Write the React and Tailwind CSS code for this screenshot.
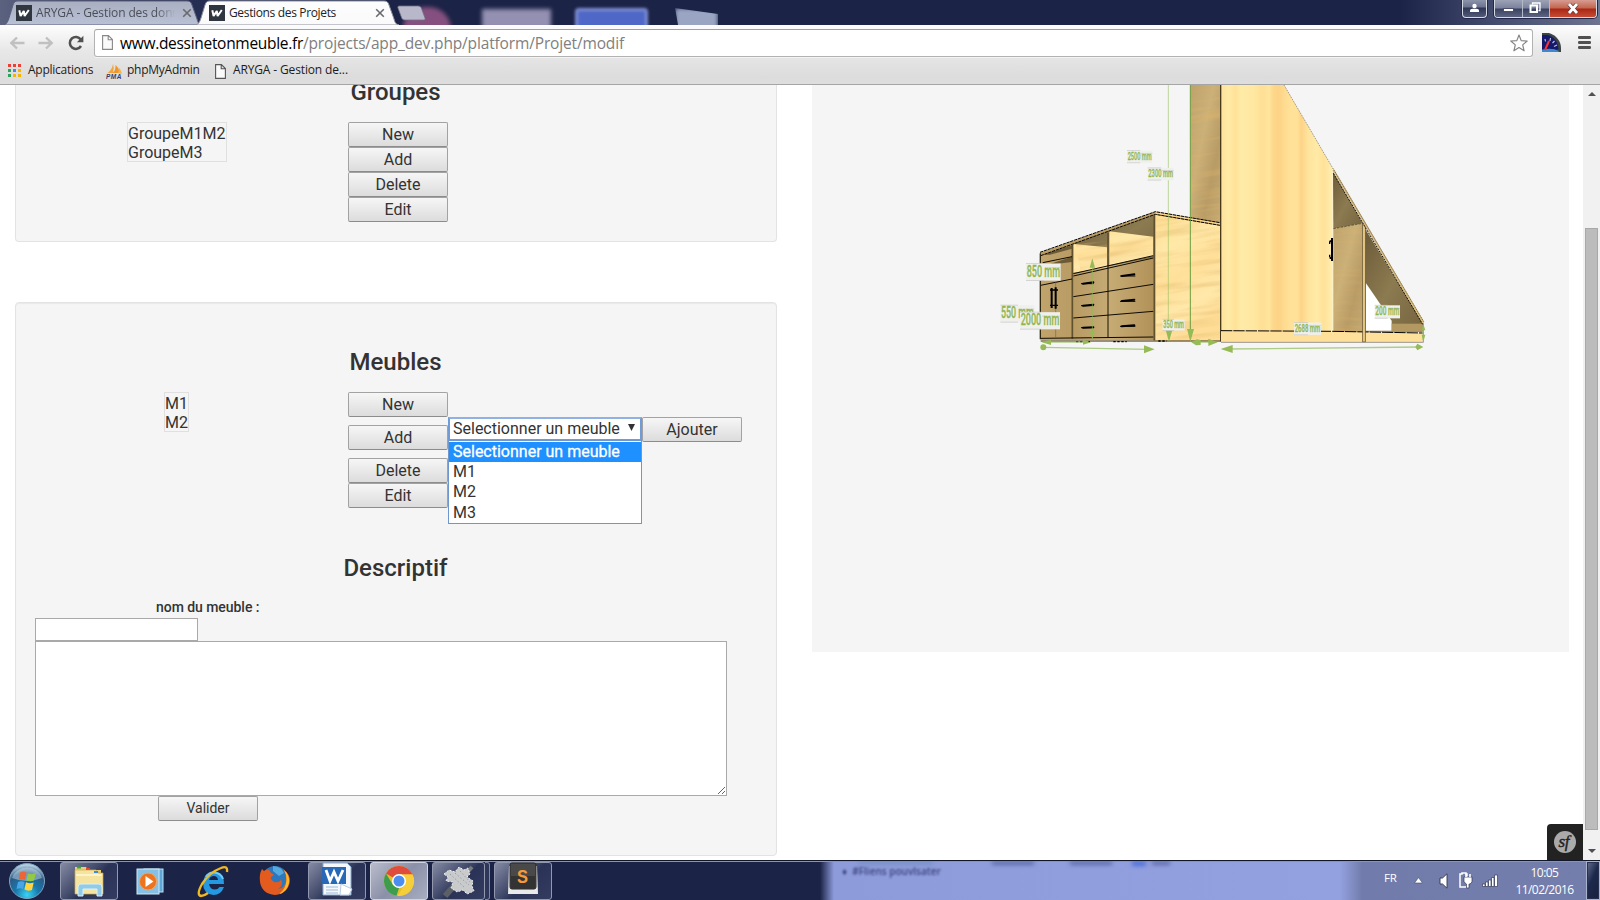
import React from "react";

const UI = "font-['Open_Sans','Noto_Sans',sans-serif]";

function TabShape({ width, from, to, stroke }) {
  const id = "tab" + width;
  return (
    <svg className="absolute left-0 top-0" width={width} height="25" viewBox={`0 0 ${width} 25`}>
      <defs>
        <linearGradient id={id} x1="0" y1="0" x2="0" y2="1">
          <stop offset="0" stopColor={from} />
          <stop offset="1" stopColor={to} />
        </linearGradient>
      </defs>
      <path
        d={`M0 25 C3 24 4 21 5 18 L9 5 C10 2 11 1 14 1 L${width - 15} 1 C${width - 12} 1 ${width - 11} 2 ${width - 10} 5 L${width - 5} 19 C${width - 4} 23 ${width - 3} 24 ${width} 25 Z`}
        fill={`url(#${id})`}
        stroke={stroke}
      />
    </svg>
  );
}

function Favicon() {
  return (
    <svg width="16" height="16" viewBox="0 0 16 16" className="shrink-0">
      <rect width="16" height="16" fill="#30363f" />
      <path d="M3.3 5.2 L4.6 11 L7.8 6 L8.6 11 L12.8 5" fill="none" stroke="#fff" strokeWidth="2" strokeLinejoin="bevel" />
    </svg>
  );
}

function Cross() {
  return (
    <svg width="10" height="10" viewBox="0 0 10 10" className="shrink-0">
      <path d="M1.2 1.2 L8.8 8.8 M8.8 1.2 L1.2 8.8" stroke="#6a6a6e" strokeWidth="1.6" />
    </svg>
  );
}

function PageIcon({ dark }) {
  return (
    <svg width="11" height="15" viewBox="0 0 11 15" className="shrink-0">
      <path d="M.6 .6 H6.4 L10.4 4.6 V14.4 H.6 Z M6.2 .8 V4.8 H10.2" fill="#fafafa" stroke={dark ? "#555" : "#888"} strokeWidth="1.1" />
    </svg>
  );
}

function TabStrip() {
  return (
    <div className="relative flex h-[25px] w-full overflow-hidden bg-[linear-gradient(90deg,#5b6280_0,#2a3358_130px,#1b2346_360px,#1b2346_1400px,#454d70_1500px,#6d7590_1600px)]">
      <div className="absolute left-[403px] top-[7px] h-11 w-12 rounded-full bg-[#85507f] blur-[2px]" />
      <div className="absolute left-[482px] top-[9px] h-5 w-[69px] bg-[#9390b2] blur-[2px]" />
      <div className="absolute left-[575px] top-[8px] h-6 w-[73px] rounded-sm border-[3px] border-[#7f8fd6] bg-[#4f67c6] blur-[1.5px]" />
      <div className="absolute left-[675px] top-[8px] h-6 w-[43px] bg-[#9aa5c4] blur-[2px] [clip-path:polygon(0_0,100%_25%,100%_100%,10%_100%)]" />
      <div className="relative ml-[4px] flex h-[25px] w-[198px] shrink-0 items-center pl-3">
        <TabShape width={198} from="#a9afc0" to="#b9c1d6" stroke="#5b617a" />
        <div className="relative flex items-center">
          <Favicon />
          <div className={`ml-1 w-[139px] overflow-hidden whitespace-nowrap text-[12px] leading-[17px] tracking-[-0.12px] text-[#4c4f58] [mask-image:linear-gradient(90deg,#000_120px,transparent_139px)] ${UI}`}>ARYGA - Gestion des donn</div>
          <span className="ml-[7px]"><Cross /></span>
        </div>
      </div>
      <div className="relative -ml-[6px] flex h-[25px] w-[203px] shrink-0 items-center pl-[13px]">
        <TabShape width={203} from="#fdfdfd" to="#fafafa" stroke="#8c8f9e" />
        <div className="relative flex items-center">
          <Favicon />
          <div className={`ml-1 w-[146px] whitespace-nowrap text-[12px] leading-[17px] tracking-[-0.35px] text-[#222] ${UI}`}>Gestions des Projets</div>
          <Cross />
        </div>
      </div>
      <svg width="32" height="25" viewBox="0 0 32 25" className="relative -ml-[3px] shrink-0">
        <path d="M4 6 H22 C24 6 25 7 25.500 8.500 L29 18 C29.500 19.500 29 20 27 20 H9 C7 20 6 19 5.500 17.500 L2 8 C1.500 6.500 2 6 4 6 Z" fill="#b9b8cb" stroke="#6e7086" strokeWidth=".8" />
      </svg>
      <div className="relative ml-auto mr-[3px] flex items-start gap-[7px]">
        <div className="flex h-[18px] w-[25px] items-center justify-center rounded-b-[4px] border border-t-0 border-[#d5d9e4] bg-[linear-gradient(#8c93aa_0,#6b738f_7px,#2e3658_8px,#555d7b_18px)] shadow-[0_0_0_1px_#22284a]">
          <svg width="11" height="12" viewBox="0 0 11 12" className="-mt-px"><circle cx="5.500" cy="4" r="2.200" fill="#fff" /><path d="M1 10 V8.500 C1 7 3 6.800 5.500 6.800 S10 7 10 8.500 V10 Z" fill="#fff" /></svg>
        </div>
        <div className="flex h-[18px] w-[103px] overflow-hidden rounded-b-[4px] border border-t-0 border-[#d5d9e4] shadow-[0_0_0_1px_#22284a]">
          <div className="flex w-[28px] items-center justify-center border-r border-[#b5bacb] bg-[linear-gradient(#9ca2b6_0,#7b829c_8px,#3a4263_9px,#606885_18px)]">
            <div className="mt-[3px] h-[4px] w-[11px] border border-[#4b5068] bg-white" />
          </div>
          <div className="flex w-[27px] items-center justify-center border-r border-[#b5bacb] bg-[linear-gradient(#9ca2b6_0,#7b829c_8px,#3a4263_9px,#606885_18px)]">
            <svg width="12" height="12" viewBox="0 0 12 12" className="-ml-[3px] -mt-px"><path d="M3.500 2.500 V1 H11 V8.500 H9.500" fill="none" stroke="#fff" strokeWidth="1.300" /><rect x="1.500" y="3.500" width="6.500" height="6.500" fill="none" stroke="#fff" strokeWidth="2" /></svg>
          </div>
          <div className="flex flex-1 items-center justify-center bg-[linear-gradient(#d69c92_0,#c3664f_8px,#a92713_9px,#c9503a_18px)]">
            <svg width="12" height="11" viewBox="0 0 12 11" className="-mt-px"><path d="M2 1 L10 10 M10 1 L2 10" stroke="#5b3a40" strokeWidth="4.200" /><path d="M2 1 L10 10 M10 1 L2 10" stroke="#fff" strokeWidth="2.800" /></svg>
          </div>
        </div>
      </div>
    </div>
  );
}

function Arrow({ flip }) {
  return (
    <svg width="16" height="14" viewBox="0 0 16 14" className={flip ? "scale-x-[-1]" : ""}>
      <path d="M15.500 7 H2.500 M8 1.500 L2.300 7 L8 12.500" fill="none" stroke="#c0c0c0" strokeWidth="2.400" />
    </svg>
  );
}

function Toolbar() {
  return (
    <div className="h-[60px] w-full border-b border-[#a5a5a5] bg-[linear-gradient(#fdfdfd_0,#e8e8e8_25px,#dcdcdc_52px,#dedede_60px)]">
      <div className="flex h-[35px] items-center">
        <div className="ml-[9px]"><Arrow /></div>
        <div className="ml-[13px]"><Arrow flip /></div>
        <svg width="16" height="16" viewBox="0 0 16 16" className="ml-[14px]">
          <path d="M13 11 A6 6 0 1 1 12.800 4.500" fill="none" stroke="#515151" strokeWidth="2.500" />
          <path d="M15.400 .8 V7.300 H8.900 Z" fill="#515151" />
        </svg>
        <div className="ml-[10px] flex h-[28px] w-[1439px] items-center rounded-[3px] border border-[#b2b2b2] border-t-[#a0a0a0] bg-white pl-[7px] shadow-[0_1px_0_#f4f4f4]">
          <PageIcon />
          <div className={`ml-[7px] whitespace-nowrap text-[15.500px] leading-[22px] text-[#808080] ${UI}`}>
            <span className="tracking-[-0.300px] text-black">www.dessinetonmeuble.fr</span><span className="tracking-[-0.15px]">/projects/app_dev.php/platform/Projet/modif</span>
          </div>
          <svg width="18" height="18" viewBox="0 0 18 18" className="ml-auto mr-[4px]">
            <path d="M9 1 L11.200 6.600 L17.200 7 L12.700 10.900 L14.100 16.800 L9 13.600 L3.900 16.800 L5.300 10.900 L.8 7 L6.800 6.600 Z" fill="#fff" stroke="#858585" strokeWidth="1.200" strokeLinejoin="round" />
          </svg>
        </div>
        <svg width="19" height="19" viewBox="0 0 19 19" className="ml-[9px]">
          <path d="M0 0 H7 C14 2 19 8 19 15 V19 H0 Z" fill="#3c4543" />
          <path d="M0 2 H5 C12 3 16 9 16.500 16 L14 17 L10 16 H0 Z" fill="#15186b" />
          <path d="M0 17 Q9 14 17 18 L16 19 H0 Z" fill="#3c8bd0" />
          <path d="M3 17 L7 8" stroke="#ff3030" strokeWidth="2" />
          <path d="M3 6 L3.500 8.500 M8.500 5 L8 8 M12.500 8 L10.500 10 M15 12 L12 13.500" stroke="#b9bddf" strokeWidth="1.200" />
        </svg>
        <svg width="13" height="13" viewBox="0 0 13 13" className="ml-[17px]">
          <path d="M1.300 1.500 H11.700 M1.300 6.500 H11.700 M1.300 11.500 H11.700" stroke="#505050" strokeWidth="2.800" strokeLinecap="round" />
        </svg>
      </div>
      <div className={`flex h-[24px] items-center pb-[5px] text-[12px] leading-[18px] text-[#1c1c1c] ${UI}`}>
        <svg width="14" height="14" viewBox="0 0 14 14" className="ml-[8px] mt-[3px]">
          <path d="M0 0h3v3H0z M5 0h3v3H5z M10 0h3v3h-3z" fill="#ed3f35" />
          <path d="M0 5h3v3H0z M0 10h3v3H0z" fill="#2fa25a" />
          <path d="M5 5h3v3H5z" fill="#4688f1" />
          <path d="M10 5h3v3h-3z M5 10h3v3H5z M10 10h3v3h-3z" fill="#f5b400" />
        </svg>
        <span className="ml-[6px] w-[78px] whitespace-nowrap tracking-[-0.26px]">Applications</span>
        <svg width="17" height="16" viewBox="0 0 17 16" className="mt-[3px]">
          <path d="M1.500 10 Q6 7 7 1 Q8.500 5 7 10 Z" fill="#f0a43c" />
          <path d="M6.500 10 Q10 7 9.500 2 Q14 6 13 10 Z" fill="#ef9628" />
          <path d="M12 10 Q13 8 12.700 4.500 Q16 8 15.500 11 Z" fill="#f3b055" />
          <text x="0" y="15.500" fontSize="6.500" fontWeight="700" fontStyle="italic" fontFamily="Liberation Sans" fill="#3a3a68" textLength="15.500">PMA</text>
        </svg>
        <span className="ml-[4px] w-[88px] whitespace-nowrap tracking-[-0.26px]">phpMyAdmin</span>
        <span className="mt-[3px]"><PageIcon dark /></span>
        <span className="ml-[7px] whitespace-nowrap tracking-[-0.14px]">ARYGA - Gestion de...</span>
      </div>
    </div>
  );
}

function Btn({ children, className = "" }) {
  return (
    <button className={`block h-[25px] w-[100px] shrink-0 rounded-[2px] border border-[#a2a2a2] border-b-[#8c8c8c] bg-[linear-gradient(#f6f6f6,#dcdcdc)] text-center text-[#333] ${className || "text-[16px] leading-[24px]"}`}>
      {children}
    </button>
  );
}

function ListBox({ items }) {
  return (
    <div className="h-[40px] border border-[#e0e0e0] pt-px text-[16px] leading-[19px] text-[#333]">
      {items.map((t) => <div key={t}>{t}</div>)}
    </div>
  );
}

const heading = "text-center text-[24px] font-medium leading-[26px] text-[#333]";

function Groupes() {
  return (
    <section className="flex h-[157px] flex-col rounded-b-[4px] border border-t-0 border-[#e3e3e3] bg-[#f5f5f5] px-[19px]">
      <h3 className={`-mt-[6px] w-[721px] ${heading}`}>Groupes</h3>
      <div className="mt-[17px] flex">
        <div className="flex w-[313px] items-start pl-[92px]"><ListBox items={["GroupeM1M2", "GroupeM3"]} /></div>
        <div className="flex flex-col">
          <Btn>New</Btn><Btn>Add</Btn><Btn>Delete</Btn><Btn>Edit</Btn>
        </div>
      </div>
    </section>
  );
}

function Meubles() {
  return (
    <section className="mt-[60px] h-[554px] rounded-[4px] border border-[#e3e3e3] bg-[#f5f5f5] px-[19px] shadow-[inset_0_1px_1px_rgba(0,0,0,.05)]">
      <h3 className={`mt-[46px] w-[721px] ${heading}`}>Meubles</h3>
      <div className="mt-[17px] flex h-[116px]">
        <div className="flex w-[313px] items-start pl-[129px]"><ListBox items={["M1", "M2"]} /></div>
        <div>
          <Btn>New</Btn>
          <div className="flex h-[41px] items-start">
            <div className="mt-[8px]"><Btn>Add</Btn></div>
            <div className="relative flex h-[24px] w-[194px] items-center border-2 border-[#6f9bd8] border-t-[#8fb1e4] bg-white pl-[3px] text-[16px] text-[#333]">
              <span className="whitespace-nowrap">Selectionner un meuble</span>
              <svg width="7" height="7" viewBox="0 0 7 7" className="mb-[3px] ml-auto mr-[5px]"><path d="M0 0 H7 L3.500 7 Z" fill="#333" /></svg>
              <div className="absolute -left-[2px] top-[21px] z-10 h-[84px] w-[194px] border border-[#6f97cf] bg-white pt-px text-[16px] leading-[20.400px]">
                <div className="h-[20px] whitespace-nowrap bg-[#1e90ff] pl-[4px] text-white [-webkit-text-stroke:0.3px_white]">Selectionner un meuble</div>
                <div className="pl-[4px]">M1</div>
                <div className="pl-[4px]">M2</div>
                <div className="pl-[4px]">M3</div>
              </div>
            </div>
            <Btn>Ajouter</Btn>
          </div>
          <Btn>Delete</Btn>
          <Btn>Edit</Btn>
        </div>
      </div>
      <h3 className={`mt-[47px] w-[721px] ${heading}`}>Descriptif</h3>
      <div className="mt-[16px] h-[21px] pl-[121px] pt-px text-[14px] font-medium leading-[18px] tracking-[-0.05px] text-[#333]">nom du meuble :</div>
      <input className="block h-[23px] w-[163px] border border-[#a9a9a9] bg-white" />
      <textarea className="block h-[155px] w-[692px] resize border border-[#a9a9a9] bg-white" />
      <div className="pl-[123px]"><Btn className="text-[14px] leading-[23px]">Valider</Btn></div>
    </section>
  );
}

function Dim({ x, y, w, size, children }) {
  return (
    <g>
      <rect x={x - 2} y={y - size * 0.86} width={w + 4} height={size * 1.12} fill="#efefec" />
      <path d={`M${x - 2} ${y - size * 0.86} H${x + w * 0.52} M${x - 2} ${y + size * 0.25} H${x + w * 0.52} M${x + w * 0.55} ${y - size * 0.6} H${x + w + 2}`} stroke="#c6c6c6" strokeWidth="2" />
      <text x={x} y={y} fontSize={size * 1.06} fontWeight="500" fontFamily="Roboto" fill="#8fb64f" stroke="#8fb64f" strokeWidth=".8" textLength={w} lengthAdjust="spacingAndGlyphs">{children}</text>
    </g>
  );
}

function Furniture() {
  return (
    <svg width="460" height="285" viewBox="0 15 1380 855" className="ml-[168px] block">
      <defs>
        <linearGradient id="door" x1="0" x2="1" y1="0" y2="0">
          <stop offset="0" stopColor="#ffe39b" /><stop offset=".07" stopColor="#ffeaa6" /><stop offset=".13" stopColor="#ffe298" />
          <stop offset=".18" stopColor="#ffeba7" /><stop offset=".3" stopColor="#ffe7a0" /><stop offset=".37" stopColor="#fedf95" />
          <stop offset=".43" stopColor="#ffe59d" /><stop offset=".47" stopColor="#fdd78a" /><stop offset=".52" stopColor="#fdd387" />
          <stop offset=".6" stopColor="#ffe096" /><stop offset=".68" stopColor="#ffe298" /><stop offset=".72" stopColor="#fed388" />
          <stop offset=".78" stopColor="#ffe49d" /><stop offset=".86" stopColor="#ffeaa6" /><stop offset=".92" stopColor="#ffe298" /><stop offset="1" stopColor="#ffeeb0" />
        </linearGradient>
        <linearGradient id="brown" x1="0" x2="1" y1="0" y2="1">
          <stop offset="0" stopColor="#bda26b" /><stop offset=".4" stopColor="#cbb078" /><stop offset=".7" stopColor="#b89b65" /><stop offset="1" stopColor="#c4a972" />
        </linearGradient>
        <linearGradient id="side" x1="0" x2=".3" y1="0" y2="1">
          <stop offset="0" stopColor="#fedd92" /><stop offset=".3" stopColor="#ffe8a8" /><stop offset=".55" stopColor="#ffe09a" /><stop offset=".8" stopColor="#ffe8aa" /><stop offset="1" stopColor="#ffdd96" />
        </linearGradient>
        <linearGradient id="drawer" x1="0" x2="1" y1="0" y2="0">
          <stop offset="0" stopColor="#c0a46c" /><stop offset=".3" stopColor="#b99b64" /><stop offset=".6" stopColor="#c6ab74" /><stop offset="1" stopColor="#b09158" />
        </linearGradient>
        <linearGradient id="shade" x1="0" x2="1" y1="0" y2="1">
          <stop offset="0" stopColor="#6b5b38" /><stop offset=".5" stopColor="#8c7a50" /><stop offset="1" stopColor="#75643f" />
        </linearGradient>
        <filter id="grain" x="0" y="0" width="1" height="1">
          <feTurbulence type="fractalNoise" baseFrequency=".006 .06" numOctaves="2" seed="4" />
          <feColorMatrix values="0 0 0 0 .75  0 0 0 0 .48  0 0 0 0 .15  0 1.6 0 0 -.68" />
        </filter>
        <clipPath id="sideClip"><path d="M526 405 L720 436 V783 H526 Z M631 15 H720 V428 L631 412 Z M280 492 L520 470 V530 L280 580 Z M1060 446 L1148 430 V755 H1060 Z" /></clipPath>
      </defs>

      <path d="M631 15 H720 V430 L631 414 Z" fill="url(#brown)" />
      <path d="M526 403 L720 436 V783 H522 Z" fill="url(#side)" />
      <path d="M182 522 L526 398 V780 H182 Z" fill="url(#drawer)" />
      <path d="M278 490 L522 404 V532 L278 580 Z" fill="url(#shade)" />
      <path d="M280 492 L382 502 V562 L280 578 Z M388 454 L520 470 V528 L388 556 Z" fill="url(#side)" />
      <path d="M188 524 L276 496 V506 L210 524 Z M198 556 L276 530 V546 Z" fill="#6b5a36" />
      <g clipPath="url(#sideClip)"><rect x="280" y="15" width="880" height="770" filter="url(#grain)" opacity=".7" transform="rotate(-9 600 400)" /></g>
      <path d="M180 518 L526 395 L720 428 V437 L526 404 L182 528 Z" fill="#bb9d62" />
      <path d="M526 396 L720 429 V435 L526 402 Z" fill="#f9d58b" />
      <path d="M180 517 L526 395 L720 428 M182 527 L526 403 L720 436" fill="none" stroke="#000" strokeWidth="3" strokeDasharray="10 2" />
      <path d="M181 520 V778" stroke="#30280f" strokeWidth="4" />
      <path d="M277 494 V776 M384 458 V774 M523 404 V782" stroke="#5f502e" strokeWidth="5" />
      <path d="M280 581 L520 527 M280 588 L520 534 M182 616 L276 597 M280 650 L520 613 M280 714 L520 694 M182 775 L520 771 M188 548 L276 530" stroke="#0d0a04" strokeWidth="3" fill="none" />
      <path d="M182 783 H720" stroke="#7b6b4a" strokeWidth="4" />
      <path d="M227 607 V774" stroke="#80683c" strokeWidth="2" />
      <path d="M215 624 V684 M227 622 V686" stroke="#000" strokeWidth="6" />
      <path d="M210 630 H234 M210 676 H234" stroke="#000" strokeWidth="4" />
      <path d="M309 611 L340 607 M309 677 L340 674 M309 743 L340 742 M426 588 L463 583 M426 663 L463 659 M426 739 L463 736" stroke="#000" strokeWidth="6" strokeLinecap="round" />
      <path d="M303 611 H341 M303 677 H341 M303 743 H341 M420 588 H466 M420 664 H466 M420 739 H466" stroke="#000" strokeWidth="3" />
      <path d="M288 785 H330 M400 785 H440 M535 783 H560" stroke="#000" strokeWidth="4" strokeDasharray="7 5" />

      <path d="M723 15 H912 L1058 264 V754 H723 Z" fill="url(#door)" />
      <path d="M722 15 V785" stroke="#473a1c" strokeWidth="4" />
      <path d="M912 15 L1058 264" stroke="#a29c8e" strokeWidth="3" strokeDasharray="5 3" />
      <path d="M1059 276 L1148 430 L1060 446 Z" fill="url(#shade)" />
      <path d="M1060 446 L1148 430 V757 H1060 Z" fill="url(#brown)" />
      <g clipPath="url(#sideClip)"><rect x="1060" y="400" width="100" height="360" filter="url(#grain)" opacity=".4" /></g>
      <path d="M1060 446 L1148 430" stroke="#453718" strokeWidth="2" strokeDasharray="8 3" />
      <path d="M1156 448 L1328 728 V755 H1156 Z" fill="url(#shade)" />
      <path d="M1157 608 L1235 722 V752 H1157 Z" fill="#fff" />
      <path d="M1235 731 H1328 V754 H1235 Z" fill="#b39861" />
      <path d="M723 752 L1328 758 V786 H723 Z" fill="#ffe09a" />
      <path d="M723 752 L1058 754 M1058 754 L1328 759" stroke="#000" strokeWidth="3" strokeDasharray="34 3" />
      <path d="M1148 432 H1156 V786 H1148 Z" fill="#f7d88e" stroke="#5c4b27" strokeWidth="2.500" />
      <path d="M723 787 H1330 V728" fill="none" stroke="#9c978b" strokeWidth="3" />
      <path d="M1060 270 L1330 728" stroke="#d9be80" strokeWidth="7" />
      <path d="M1058 264 L1331 725" stroke="#6e654f" strokeWidth="2.500" strokeDasharray="5 2" />
      <path d="M1060 280 L1328 733" stroke="#171004" strokeWidth="3" strokeDasharray="6 3" />
      <path d="M1056 474 V543 M1049 484 H1058 M1049 534 H1058" stroke="#000" strokeWidth="6" />
      <path d="M1049 484 V492 M1049 524 V532" stroke="#000" strokeWidth="4" />

      <g stroke="#8fbb55" fill="none">
        <path d="M565 15 V775" strokeWidth="3" opacity=".55" />
        <path d="M631 15 V750" strokeWidth="3" stroke="#6c9d3e" />
        <path d="M337 555 V765" strokeWidth="3" opacity=".7" />
        <path d="M190 802 L500 808 M745 807 L1320 801" strokeWidth="4" opacity=".7" />
        <path d="M200 786 H320 M650 786 H700 M1330 740 V780" strokeWidth="3" />
      </g>
      <g fill="#94bb55">
        <path d="M337 535 L345 563 H329 Z M337 778 L329 752 H345 Z M567 785 L557 750 H577 Z M631 785 L621 747 H642 Z" />
        <path d="M524 808 L492 796 V820 Z M722 807 L758 795 V819 Z M185 787 L213 779 V795 Z M333 787 L309 779 V794 Z M634 787 L650 778 L662 780 V795 L648 796 Z M713 787 L685 776 V798 Z" />
        <path d="M1330 732 L1336 751 H1325 Z M1330 786 L1325 764 H1336 Z M1330 801 L1312 791 L1306 801 L1312 811 Z" />
        <circle cx="190" cy="802" r="9" />
      </g>

      <Dim x={443} y={240} w={72} size={33}>2500 mm</Dim>
      <Dim x={505} y={292} w={74} size={33}>2300 mm</Dim>
      <Dim x={140} y={590} w={100} size={46}>850 mm</Dim>
      <Dim x={63} y={715} w={98} size={46}>550 mm</Dim>
      <Dim x={122} y={736} w={116} size={46}>2000 mm</Dim>
      <Dim x={550} y={744} w={62} size={30}>350 mm</Dim>
      <Dim x={944} y={756} w={77} size={33}>2688 mm</Dim>
      <Dim x={1186} y={706} w={72} size={35}>200 mm</Dim>
    </svg>
  );
}

function Page() {
  return (
    <main className="flex h-[775px] w-full overflow-hidden bg-white font-[Roboto,sans-serif]">
      <div className="ml-[15px] w-[762px] shrink-0">
        <Groupes />
        <Meubles />
      </div>
      <div className="ml-[35px] h-[567px] w-[757px] shrink-0 bg-[#f5f5f5]">
        <Furniture />
      </div>
      <div className="relative w-[14px] shrink-0">
        <div className="absolute bottom-0 right-0 flex h-[36px] w-[36px] items-center justify-center rounded-tl-[4px] bg-[#222]">
          <svg width="24" height="24" viewBox="0 0 24 24">
            <circle cx="12" cy="12" r="11" fill="#aaa" />
            <text x="5.500" y="16.500" fontSize="17" fontStyle="italic" fontFamily="Liberation Serif" fill="#222" stroke="#222" strokeWidth=".4" textLength="11">sf</text>
          </svg>
        </div>
      </div>
      <div className="flex w-[17px] shrink-0 flex-col items-center bg-[#f1f1f1]">
        <svg width="8" height="4" viewBox="0 0 8 4" className="mt-[7px]"><path d="M4 0 L8 4 H0 Z" fill="#505050" /></svg>
        <div className="mt-[132px] h-[602px] w-[13px] border border-[#a8a8a8] bg-[#bcbcbc]" />
        <svg width="8" height="4" viewBox="0 0 8 4" className="mt-[19px]"><path d="M4 4 L8 0 H0 Z" fill="#505050" /></svg>
      </div>
    </main>
  );
}

function Task({ active, className, children }) {
  return (
    <div className={`flex h-[38px] shrink-0 items-center justify-center rounded-[3px] border ${active ? "border-[#d0d4e0] bg-[linear-gradient(135deg,#b9bccb,#8a90a8_50%,#a9aec0)]" : "border-[#9298ae] bg-[linear-gradient(135deg,#858ba4_0,#3e4667_45%,#2a3257_55%,#343c60_100%)]"} ${className}`}>
      {children}
    </div>
  );
}

function StartOrb() {
  return (
    <svg width="38" height="38" viewBox="0 0 38 38" className="ml-[8px] shrink-0">
      <defs>
        <radialGradient id="orb" cx=".5" cy=".9" r=".85">
          <stop offset="0" stopColor="#39d4f5" /><stop offset=".4" stopColor="#1878ac" /><stop offset=".75" stopColor="#2c5a85" /><stop offset="1" stopColor="#b3cfe0" />
        </radialGradient>
      </defs>
      <circle cx="19" cy="19" r="17.500" fill="url(#orb)" stroke="#7fa4bd" />
      <path d="M4 16 A15.500 14 0 0 1 34 16 Q19 22 4 16" fill="#d3e4ee" opacity=".45" />
      <path d="M12 10.500 Q15 8.500 18.500 10.500 L17 18 Q13.500 16.500 10.500 18 Z" fill="#ee6535" />
      <path d="M20 11.500 Q24 13 28 11 L26 18.500 Q22.500 20 18.500 18.500 Z" fill="#94c944" />
      <path d="M10 20 Q13 18.500 16.600 20 L15 27 Q12 25.500 8.500 27 Z" fill="#4aa5e6" />
      <path d="M18 20.300 Q22 22 25.700 20.500 L24 28 Q20 29.500 16.400 27.600 Z" fill="#ffd43e" />
    </svg>
  );
}

function Explorer() {
  return (
    <svg width="34" height="32" viewBox="0 0 34 32">
      <path d="M3 2 H14 L16 5 H29 V28 H3 Z" fill="#e9ce75" />
      <path d="M3 5 H24 L26 8 H31 V29 H3 Z" fill="#f5e4a0" stroke="#cfae51" strokeWidth=".7" />
      <path d="M4 10 H30" stroke="#fff4c9" strokeWidth="2" />
      <rect x="5" y="1.500" width="4" height="2" fill="#2fab34" /><rect x="14" y="3" width="4" height="2" fill="#e64831" /><rect x="22" y="6" width="4" height="2" fill="#3f8ae0" />
      <path d="M6 31 V22 Q6 19 9 19 H27 Q30 19 30 22 V31 H25 V24 H11 V31 Z" fill="#91cbe7" stroke="#d9f0fa" strokeWidth="1" />
    </svg>
  );
}

function Taskbar() {
  return (
    <footer className="relative flex h-[40px] w-full items-center overflow-hidden border-t border-[#111629] bg-[linear-gradient(90deg,#1b2346_0,#1b2346_820px,#8e9bdb_834px,#94a1e0_1340px,#727cac_1362px,#747eab_1600px)] shadow-[inset_0_1px_0_#8c94b4]">
      <div className={`absolute left-[842px] top-[3px] whitespace-nowrap text-[10px] font-semibold leading-[14px] text-[#39447e] blur-[1.3px] ${UI}`}>♦&nbsp; #Fliens pouvlsater</div>
      <div className="absolute left-[858px] top-0 h-[3px] w-[75px] bg-[#6f8dbb] blur-[2px]" />
      <div className="absolute left-[992px] top-0 h-[4px] w-[42px] bg-[#5d6aa9] blur-[2px]" />
      <div className="absolute left-[1070px] top-0 h-[4px] w-[42px] bg-[#5d6aa9] blur-[2px]" />
      <div className="absolute left-[1132px] top-0 h-[5px] w-[14px] bg-[#4d70d8] blur-[2px]" />
      <div className="absolute left-[1152px] top-0 h-[4px] w-[18px] bg-[#5d6aa9] blur-[2px]" />
      <StartOrb />
      <Task className="ml-[14px] w-[58px]"><Explorer /></Task>
      <svg width="28" height="30" viewBox="0 0 28 30" className="ml-[18px] shrink-0">
        <rect x="8" y="3" width="19" height="23" fill="#5fa6d6" stroke="#bce0f4" /><rect x="1" y="3" width="22" height="25" fill="#85c0e5" stroke="#d0ebf8" />
        <circle cx="12" cy="15.500" r="8.500" fill="#ec7420" stroke="#f5a45c" /><path d="M9.500 10 L17.500 15.500 L9.500 21 Z" fill="#fff" />
      </svg>
      <svg width="34" height="34" viewBox="0 0 34 34" className="ml-[32px] shrink-0">
        <path d="M28 20 H13 Q14 25.500 19 25.500 Q22 25.500 23.500 23 H28 Q25 31 17.500 31 Q7 30 7 19 Q8 8 18 7.500 Q28 8 28 20 Z M13 16 H22 Q21.500 12 17.800 12 Q14 12 13 16 Z" fill="#2498e0" fillRule="evenodd" />
        <path d="M10 13 Q13 8 18 8.500 Q25 9 27 15" fill="none" stroke="#72c9f5" strokeWidth="2" />
        <path d="M31 8 Q32 1 25 4 Q14 8 6 20 Q0 31 5 32 Q8 32 12 29" fill="none" stroke="#efb925" strokeWidth="2.300" />
      </svg>
      <svg width="32" height="34" viewBox="0 0 32 34" className="ml-[29px] shrink-0">
        <circle cx="16" cy="15" r="13" fill="#2c77bd" /><path d="M14 2 Q23 3 25 9 L20 12 L14 7 Z" fill="#54aadc" />
        <path d="M3 5 L5 7 Q8 4 11 7 Q11 9 14 10 Q16 11 12 13 Q11 15 15 18 Q21 19 22 15 Q25 21 19 25 Q27 24 27 15 Q27 9 24 5 Q31 10 31 17 Q29 30 16 31 Q3 30 1 18 Q0 10 3 5 Z" fill="#e35b1e" />
        <path d="M25 6 Q31 11 30 19 Q28 28 20 30 Q27 25 27.500 16 Q28 11 25 6 Z" fill="#fbbb2e" />
      </svg>
      <Task className="ml-[17px] w-[58px]">
        <svg width="32" height="34" viewBox="0 0 32 34" className="-mt-[3px]">
          <path d="M2 1 H26 L30 5 V33 H2 Z" fill="#f4f7fb" stroke="#8cacd1" />
          <path d="M1 5 H25 V22 H1 Z" fill="#2768b7" /><path d="M5 8 L9 19 L13 10 L17 19 L22 8" fill="none" stroke="#fff" strokeWidth="2.800" />
          <path d="M5 25 H17 M5 28 H17 M5 31 H17" stroke="#9fb9d8" /><path d="M20 22 L31 27 L28 33 H19 Z" fill="#fff" stroke="#b6cce6" />
        </svg>
      </Task>
      <Task active className="ml-[4px] w-[58px]">
        <svg width="32" height="32" viewBox="0 0 32 32">
          <circle cx="16" cy="16" r="15" fill="#e7bd2c" />
          <path d="M16 16 L3 8.500 A15 15 0 0 1 29 8.500 L29.500 10 H16 Z" fill="#df4b3c" />
          <path d="M3 8.500 L10 20 L16 23 L13.500 30.800 A15 15 0 0 1 3 8.500 Z" fill="#3d9d4f" />
          <path d="M16 9.300 H29.400 A15 15 0 0 1 14.500 31 L22 19 Z" fill="#f6ce3a" />
          <circle cx="16" cy="16" r="7" fill="#fff" /><circle cx="16" cy="16" r="5.500" fill="#4b8df0" />
        </svg>
      </Task>
      <Task className="ml-[4px] w-[53px]">
        <svg width="32" height="34" viewBox="0 0 32 34">
          <path d="M29 3 L4 30" stroke="#777b80" strokeWidth="4" /><path d="M2 32 L10 23" stroke="#5b5f66" strokeWidth="6" />
          <path d="M1 10 L6 6 L12 8 L16 3 L21 6 L25 4 L27 10 L24 13 L30 17 L29 22 L31 27 L24 30 L20 26 L14 28 L8 24 L10 18 L3 17 L5 13 Z" fill="#c9cacc" stroke="#efefef" strokeDasharray="2 1.500" />
          <path d="M7 10 L22 24 M12 9 L26 21 M17 7 L27 18" stroke="#9a9da1" strokeDasharray="1.500 2" />
        </svg>
      </Task>
      <div className="h-[38px] w-[5px] shrink-0 rounded-r-[3px] border border-l-0 border-[#8288a2] bg-[#2e3659]" />
      <Task className="ml-[4px] w-[58px]">
        <svg width="32" height="34" viewBox="0 0 32 34" className="-mt-[3px]">
          <path d="M2 4 H30 L31 32 H1 Z" fill="#e9e9e9" /><rect x="3" y="1" width="26" height="26" rx="2" fill="#494949" stroke="#292929" /><path d="M4 14 H28 V27 H4 Z" fill="#333" />
          <text x="10" y="21" fontSize="19" fontWeight="700" fontFamily="Liberation Sans" fill="#f89a3a" textLength="11" lengthAdjust="spacingAndGlyphs">S</text>
        </svg>
      </Task>
      <div className={`ml-auto flex h-full items-center text-[12px] text-white ${UI}`}>
        <span className="-mt-[6px] w-[30px] text-[11.500px] tracking-[-0.3px]">FR</span>
        <svg width="9" height="7" viewBox="0 0 9 7"><path d="M4.500 .5 L8.500 6 H.5 Z" fill="#fff" stroke="#404a75" strokeWidth=".6" /></svg>
        <svg width="10" height="16" viewBox="0 0 10 16" className="ml-[16px]"><path d="M1 5 H3.500 L8 .8 V15.200 L3.500 11 H1 Z" fill="#fff" stroke="#303654" strokeWidth=".9" /></svg>
        <svg width="16" height="17" viewBox="0 0 16 17" className="ml-[9px]"><path d="M2 2 H4 V1 H8 V2 H9 V15 H2 Z" fill="none" stroke="#fff" strokeWidth="1.500" /><path d="M6 5 H14 V10 L12 12 H11 V16 H8.500 V12 L6 10 Z" fill="#fff" stroke="#303654" strokeWidth=".7" /><path d="M8 5 V2 M12 5 V2" stroke="#fff" strokeWidth="1.600" /></svg>
        <svg width="16" height="13" viewBox="0 0 16 13" className="ml-[8px]"><path d="M.5 10 H3 V12.500 H.5 Z M3.500 8 H6 V12.500 H3.500 Z M6.500 6 H9 V12.500 H6.500 Z M9.500 3.500 H12 V12.500 H9.500 Z M12.500 1 H15.500 V12.500 H12.500 Z" fill="#fff" stroke="#353b5c" strokeWidth=".7" /></svg>
        <div className="ml-[16px] w-[61px] whitespace-nowrap text-center text-[12px] leading-[17px] tracking-[-0.55px]"><div>10:05</div><div>11/02/2016</div></div>
        <div className="ml-[11px] h-[39px] w-[14px] border border-[#aab2ce] bg-[linear-gradient(115deg,#66708e_0,#1d294c_45%,#17213f_100%)] shadow-[inset_0_0_0_1px_#27304e]" />
      </div>
    </footer>
  );
}

export default function App() {
  return (
    <div className="flex h-[900px] w-[1600px] flex-col overflow-hidden bg-white">
      <TabStrip />
      <Toolbar />
      <Page />
      <Taskbar />
    </div>
  );
}
